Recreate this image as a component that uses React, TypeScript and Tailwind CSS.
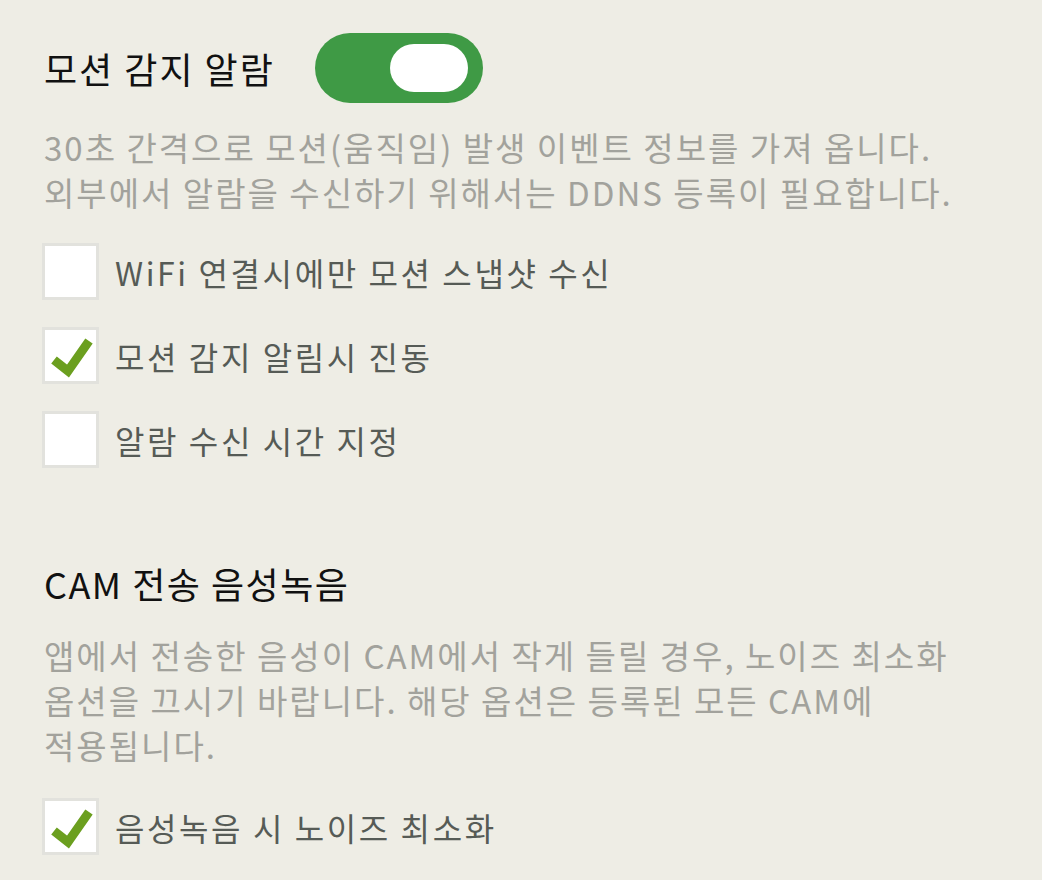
import React, { useState } from "react";

const Toggle = ({ on, onChange }: { on: boolean; onChange: () => void }) => (
  <button
    onClick={onChange}
    className={`flex h-[70px] w-[168px] items-center rounded-full px-[15px] ${
      on ? "justify-end bg-[#3f9a45]" : "justify-start bg-[#bdbdb6]"
    }`}
  >
    <span className="block h-[48px] w-[78px] rounded-full bg-white" />
  </button>
);

const CheckRow = ({
  label,
  checked,
  onToggle,
}: {
  label: string;
  checked: boolean;
  onToggle: () => void;
}) => (
  <div className="flex h-[57px] cursor-pointer items-center gap-[16px]" onClick={onToggle}>
    <div className="flex h-[57px] w-[57px] shrink-0 items-center justify-center border-[3px] border-[#e2e2dd] bg-white">
      {checked && (
        <svg width="51" height="51" viewBox="0 0 51 51">
          <path
            d="M9 30 L23 41 L44 11"
            fill="none"
            stroke="#6b9f1f"
            strokeWidth="9"
            strokeLinecap="butt"
            strokeLinejoin="miter"
          />
        </svg>
      )}
    </div>
    <span className="whitespace-nowrap text-[32px] leading-none tracking-[2.6px] text-[#565b56]">{label}</span>
  </div>
);

export default function App() {
  const [motion, setMotion] = useState(true);
  const [opts, setOpts] = useState({ wifi: false, vibrate: true, schedule: false, noise: true });
  const flip = (k: keyof typeof opts) => setOpts({ ...opts, [k]: !opts[k] });

  return (
    <div
      className="min-h-[880px] w-full bg-[#eeede5] pl-[42px] pt-[33px]"
      style={{ fontFamily: '"Noto Sans CJK KR", "Noto Sans", sans-serif' }}
    >
      {/* 모션 감지 */}
      <div className="flex items-center gap-[40px] pl-[2px]">
        <h2 className="whitespace-nowrap text-[36px] font-normal leading-none tracking-[2px] text-[#111]">
          모션 감지 알람
        </h2>
        <Toggle on={motion} onChange={() => setMotion(!motion)} />
      </div>
      <p className="mt-[22px] whitespace-nowrap pl-[2px] text-[33px] leading-[45px] tracking-[2px] text-[#a2a29c]">
        30초 간격으로 모션(움직임) 발생 이벤트 정보를 가져 옵니다.
        <br />
        외부에서 알람을 수신하기 위해서는 DDNS 등록이 필요합니다.
      </p>
      <div className="mt-[28px] flex flex-col gap-[27px]">
        <CheckRow label="WiFi 연결시에만 모션 스냅샷 수신" checked={opts.wifi} onToggle={() => flip("wifi")} />
        <CheckRow label="모션 감지 알림시 진동" checked={opts.vibrate} onToggle={() => flip("vibrate")} />
        <CheckRow label="알람 수신 시간 지정" checked={opts.schedule} onToggle={() => flip("schedule")} />
      </div>

      {/* CAM 전송 음성녹음 */}
      <h2 className="mt-[97px] whitespace-nowrap pl-[2px] text-[36px] font-normal leading-none tracking-[1.5px] text-[#111]">
        CAM 전송 음성녹음
      </h2>
      <p className="mt-[32px] whitespace-nowrap pl-[2px] text-[33px] leading-[45px] tracking-[2px] text-[#a2a29c]">
        앱에서 전송한 음성이 CAM에서 작게 들릴 경우, 노이즈 최소화
        <br />
        옵션을 끄시기 바랍니다. 해당 옵션은 등록된 모든 CAM에
        <br />
        적용됩니다.
      </p>
      <div className="mt-[30px]">
        <CheckRow label="음성녹음 시 노이즈 최소화" checked={opts.noise} onToggle={() => flip("noise")} />
      </div>
    </div>
  );
}
